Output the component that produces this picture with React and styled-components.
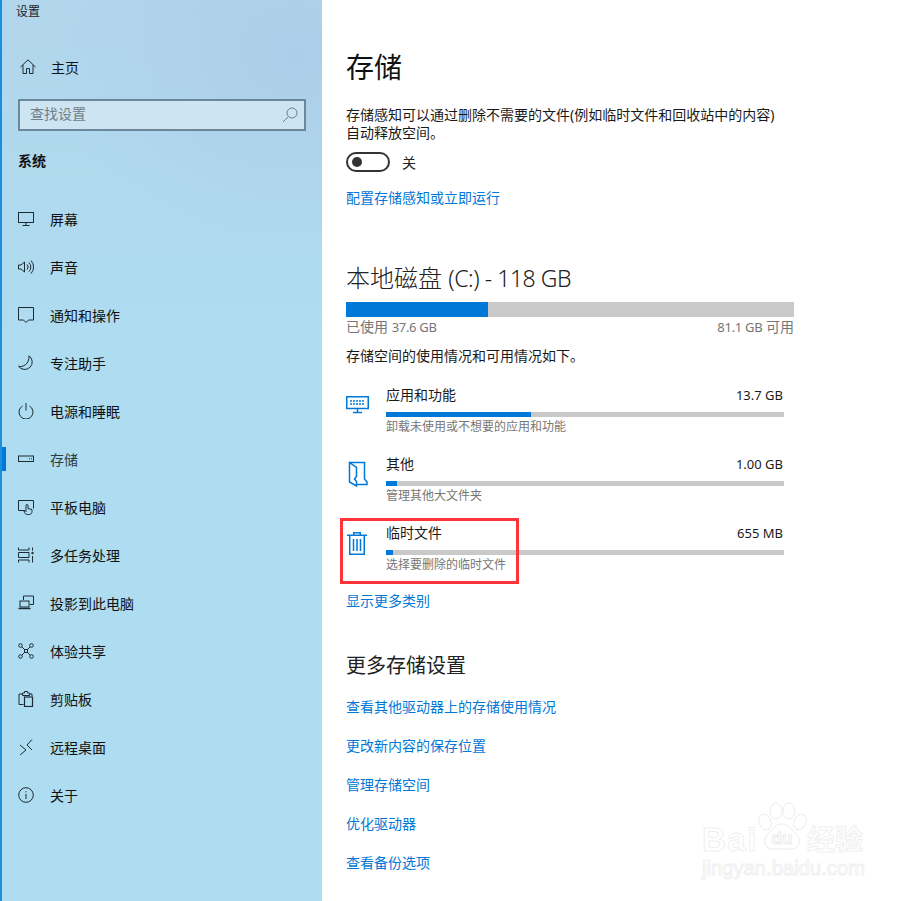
import React from 'react';
import styled, { createGlobalStyle } from 'styled-components';

const GlobalStyle = createGlobalStyle`
  html, body {
    margin: 0;
    padding: 0;
    background: #fff;
  }
  body {
    font-family: "Noto Sans", "Noto Sans CJK SC", sans-serif;
    color: #1a1a1a;
  }
`;

const Page = styled.div`
  position: relative;
  display: flex;
  width: 915px;
  height: 901px;
  overflow: hidden;
  background: #fff;
`;

const Sidebar = styled.aside`
  width: 320px;
  flex: none;
  border-left: 2px solid #1a8fe0;
  background:
    radial-gradient(ellipse 240px 200px at 92% 6%, #abcfe8 0%, rgba(171, 207, 232, 0) 100%),
    linear-gradient(180deg, #b2d6ec 0%, #aedcf0 38%, #aedcf0 100%);
`;

const AppTitle = styled.div`
  height: 22px;
  padding: 1px 0 0 14px;
  line-height: 22px;
  font-size: 12px;
  color: #222;
`;

const HomeRow = styled.div`
  display: flex;
  align-items: center;
  gap: 15px;
  height: 48px;
  margin-top: 20px;
  padding-left: 18px;
  font-size: 14px;
  color: #111;
`;

const SearchBox = styled.div`
  display: flex;
  align-items: center;
  justify-content: space-between;
  box-sizing: border-box;
  width: 288px;
  height: 32px;
  margin: 8px 0 0 16px;
  padding: 0 6px 4px 10px;
  border: 2px solid #6b8798;
  background: #cde4f2;
  font-size: 14px;
  color: #6e7f8a;
`;

const SearchIcon = styled.svg`
  width: 16px;
  height: 16px;
  flex: none;
  margin-top: 4px;
  fill: none;
  stroke: #6e7f8a;
  stroke-width: 1;
`;

const GroupTitle = styled.div`
  height: 20px;
  line-height: 20px;
  margin: 20px 0 0 16px;
  font-size: 14px;
  font-weight: 700;
  color: #111;
`;

const NavList = styled.nav`
  margin-top: 24px;
`;

const NavRow = styled.div`
  position: relative;
  display: flex;
  align-items: center;
  gap: 16px;
  height: 48px;
  padding-left: 16px;
  font-size: 14px;
  color: ${p => (p.$active ? '#2c3a42' : '#111')};

  &::before {
    content: '';
    display: ${p => (p.$active ? 'block' : 'none')};
    position: absolute;
    left: 0;
    top: 12px;
    width: 4px;
    height: 24px;
    background: #0078d7;
  }
`;

const NavIcon = styled.svg`
  width: 16px;
  height: 16px;
  flex: none;
  fill: none;
  stroke: #1c2b33;
  stroke-width: 1;
`;

const Main = styled.main`
  flex: 1;
  padding: 47px 0 0 24px;
`;

const Column = styled.div`
  width: 448px;
`;

const PageTitle = styled.h1`
  margin: 0;
  font-size: 28px;
  line-height: 40px;
  font-weight: 400;
  color: #111;
`;

const Text = styled.p`
  margin: ${p => p.$top || 0}px 0 0;
  font-size: 14px;
  line-height: ${p => p.$lh || 20}px;
  color: #1a1a1a;
  white-space: nowrap;
`;

const ToggleRow = styled.div`
  display: flex;
  align-items: center;
  gap: 12px;
  margin-top: 10px;
  height: 20px;
  font-size: 14px;
  color: #222;
`;

const Toggle = styled.div`
  display: flex;
  align-items: center;
  box-sizing: border-box;
  width: 44px;
  height: 20px;
  padding-left: 4px;
  border: 2px solid #333;
  border-radius: 10px;

  &::after {
    content: '';
    width: 10px;
    height: 10px;
    border-radius: 50%;
    background: #333;
  }
`;

const Link = styled.a`
  display: block;
  margin-top: ${p => p.$top || 0}px;
  font-size: 14px;
  line-height: 20px;
  color: #0078d7;
  white-space: nowrap;
`;

const DiskTitle = styled.h2`
  margin: 54px 0 0;
  font-size: 24px;
  line-height: 32px;
  font-weight: 300;
  color: #222;
`;

const DiskLatin = styled.span`
  font-size: 23px;
  letter-spacing: -0.45px;
`;

const Track = styled.div`
  height: ${p => p.$h}px;
  margin-top: ${p => p.$top}px;
  background: #c9c9c9;
`;

const Fill = styled.div`
  height: 100%;
  background: #0078d7;
`;

const UsageRow = styled.div`
  display: flex;
  justify-content: space-between;
  font-size: 14px;
  line-height: 20px;
  color: #767676;
`;

const UsageNumber = styled.span`
  font-size: 13px;
  letter-spacing: -0.3px;
`;

const Categories = styled.div`
  display: flex;
  flex-direction: column;
  gap: 17px;
  margin-top: 19px;
`;

const Category = styled.div`
  position: relative;
  display: grid;
  grid-template-columns: 40px 398px;
`;

const CategoryIcon = styled.svg`
  width: 26px;
  height: 26px;
  margin-top: 7px;
  fill: none;
  stroke: #0078d7;
  stroke-width: 1.5;
`;

const CategoryHead = styled.div`
  display: flex;
  justify-content: space-between;
  padding-right: 1px;
  font-size: 14px;
  line-height: 20px;
  color: #1a1a1a;
`;

const CategorySize = styled.span`
  font-size: 13px;
`;

const CategoryNote = styled.div`
  font-size: 12px;
  line-height: 20px;
  color: #767676;
`;

const Highlight = styled.div`
  position: absolute;
  left: -6px;
  top: -5px;
  width: 179px;
  height: 66px;
  border: 3px solid #ff3338;
  box-sizing: border-box;
`;

const SectionTitle = styled.h3`
  margin: 41px 0 0;
  font-size: 20px;
  line-height: 28px;
  font-weight: 400;
  color: #222;
`;

const LinkList = styled.div`
  display: flex;
  flex-direction: column;
  gap: 19px;
  margin-top: 17px;
`;

const Watermark = styled.div`
  position: absolute;
  left: 702px;
  top: 802px;
  width: 170px;
  color: #fff;
  -webkit-text-stroke: 1px #f0f0f0;
`;

const MarkTop = styled.div`
  display: flex;
  align-items: flex-end;
  height: 54px;
  font-family: "Liberation Sans", sans-serif;
  font-weight: 700;
`;

const MarkBrand = styled.span`
  width: 55px;
  font-size: 33px;
  line-height: 32px;
  letter-spacing: 1.5px;
`;

const MarkCn = styled.span`
  font-family: "Noto Sans CJK SC", sans-serif;
  font-size: 28px;
  line-height: 36px;
`;

const MarkPaw = styled.svg`
  width: 50px;
  height: 54px;
  flex: none;
  fill: #fff;
  stroke: #ececec;
`;

const MarkUrl = styled.div`
  margin-top: 1px;
  font-family: "Liberation Sans", sans-serif;
  font-size: 20px;
  line-height: 22px;
  letter-spacing: 0.1px;
`;

const navItems = [
  { label: '屏幕', icon: <><rect x="0.5" y="1.5" width="15" height="10" /><path d="M8 11.5V14M4.5 14.5h7" /></> },
  { label: '声音', icon: <><path d="M0.5 6v4h2.5l3.5 3V3L3 6z" /><path d="M9 5.5a3.5 3.5 0 0 1 0 5M11 3.5a6.5 6.5 0 0 1 0 9M13 1.5a9.5 9.5 0 0 1 0 13" /></> },
  { label: '通知和操作', icon: <path d="M0.5 0.5h15v12.5h-5l-2.5 2.5-2.5-2.5h-5z" /> },
  { label: '专注助手', icon: <path d="M11 0.8a7.5 7.5 0 1 1-10.4 10.5c4.4 1.4 11-2.6 10.4-10.5z" /> },
  { label: '电源和睡眠', icon: <><path d="M4.5 3a7 7 0 1 0 7 0" /><path d="M8 0v7.5" /></> },
  { label: '存储', active: true, icon: <><rect x="0.5" y="5" width="15" height="5.5" /><path d="M11 7.8h1M13 7.8h1" /></> },
  { label: '平板电脑', icon: <><path d="M7 11.5H0.5v-10h15v8" /><path d="M9.5 15.5c-2 0-3-1.5-3.5-3.5l1-.5 1 1V6.5a1 1 0 0 1 2 0v3l4 1v2c0 1.5-1 3-2.5 3z" /></> },
  { label: '多任务处理', icon: <><path d="M0.5 0.5v2.5h10.5V0.5M0.5 15.5v-2.5h10.5v2.5M0.5 5.5h10.5v5H0.5zM14.5 0.5v3M14.5 9v6.5" /><circle cx="14.5" cy="6" r="0.8" fill="#1c2b33" /></> },
  { label: '投影到此电脑', icon: <><path d="M5.5 5V1h10v8.5H12" /><rect x="2" y="6" width="9" height="6" /><path d="M0.5 13.5h12" strokeWidth="1.4" /></> },
  { label: '体验共享', icon: <><circle cx="2.5" cy="2.5" r="1.8" /><circle cx="13.5" cy="2.5" r="1.8" /><circle cx="2.5" cy="13.5" r="1.8" /><circle cx="13.5" cy="13.5" r="1.8" /><rect x="6.5" y="6.5" width="3" height="3" /><path d="M3.8 3.8l2.7 2.7M12.2 3.8L9.5 6.5M3.8 12.2l2.7-2.7M12.2 12.2L9.5 9.5" /></> },
  { label: '剪贴板', icon: <><path d="M5.5 13.5H1V3h3M12 3h2v2" /><path d="M4.5 4.5V2h2V0.5h3V2h2v2.5z" /><rect x="6.5" y="6" width="8" height="9.5" strokeWidth="1.2" /></> },
  { label: '远程桌面', icon: <path d="M2 6l6 5-6 5M14 0.5L9 6l5 5" /> },
  { label: '关于', icon: <><circle cx="8" cy="8" r="7.3" /><path d="M8 7v5M8 4.2v1.2" /></> },
];

const categories = [
  {
    name: '应用和功能',
    size: '13.7 GB',
    note: '卸载未使用或不想要的应用和功能',
    width: 145,
    icon: (
      <>
        <rect x="0.75" y="4.75" width="21.5" height="11.75" />
        <path d="M11.5 17v3M7 20.5h9" />
        <path d="M4 9h14M4 12h14" strokeWidth="2" strokeDasharray="2 1" opacity="0.75" />
      </>
    ),
  },
  {
    name: '其他',
    size: '1.00 GB',
    note: '管理其他大文件夹',
    width: 11,
    icon: <path d="M3.5 1.5h15v16.5l2.5 3v2.5H10.5M3.5 1.5l7 5v9l-2 2.5 2 2.5v4.5l-7-4z" />,
  },
  {
    name: '临时文件',
    size: '655 MB',
    note: '选择要删除的临时文件',
    width: 7,
    highlighted: true,
    icon: <path d="M1 5.25h20M7.75 5V2.75h6.5V5M3.75 5.25v19h14.5v-19M7.5 9v12M11 9v12M14.5 9v12" />,
  },
];

const moreLinks = ['查看其他驱动器上的存储使用情况', '更改新内容的保存位置', '管理存储空间', '优化驱动器', '查看备份选项'];

export default function App() {
  return (
    <Page>
      <GlobalStyle />
      <Sidebar>
        <AppTitle>设置</AppTitle>
        <HomeRow>
          <NavIcon viewBox="0 0 16 16">
            <path d="M0.5 8L8 0.8 15.5 8M3 6v8.5h3.5v-5h3v5H13V6" />
          </NavIcon>
          主页
        </HomeRow>
        <SearchBox>
          查找设置
          <SearchIcon viewBox="0 0 16 16">
            <circle cx="10" cy="6" r="5" />
            <path d="M6.5 9.5L1 15" />
          </SearchIcon>
        </SearchBox>
        <GroupTitle>系统</GroupTitle>
        <NavList>
          {navItems.map(item => (
            <NavRow key={item.label} $active={item.active}>
              <NavIcon viewBox="0 0 16 16">{item.icon}</NavIcon>
              {item.label}
            </NavRow>
          ))}
        </NavList>
      </Sidebar>
      <Main>
        <Column>
          <PageTitle>存储</PageTitle>
          <Text $top={19} $lh={18}>
            存储感知可以通过删除不需要的文件(例如临时文件和回收站中的内容)
            <br />
            自动释放空间。
          </Text>
          <ToggleRow>
            <Toggle />
            关
          </ToggleRow>
          <Link $top={16}>配置存储感知或立即运行</Link>
          <DiskTitle>
            本地磁盘 <DiskLatin>(C:) - 118 GB</DiskLatin>
          </DiskTitle>
          <Track $h={15} $top={8}>
            <Fill style={{ width: 142 }} />
          </Track>
          <UsageRow>
            <span>已使用 <UsageNumber>37.6 GB</UsageNumber></span>
            <span><UsageNumber>81.1 GB</UsageNumber> 可用</span>
          </UsageRow>
          <Text $top={9}>存储空间的使用情况和可用情况如下。</Text>
          <Categories>
            {categories.map(c => (
              <Category key={c.name}>
                <CategoryIcon viewBox="0 0 26 26">{c.icon}</CategoryIcon>
                <div>
                  <CategoryHead>
                    <span>{c.name}</span>
                    <CategorySize>{c.size}</CategorySize>
                  </CategoryHead>
                  <Track $h={5} $top={7}>
                    <Fill style={{ width: c.width }} />
                  </Track>
                  <CategoryNote>{c.note}</CategoryNote>
                </div>
                {c.highlighted && <Highlight />}
              </Category>
            ))}
          </Categories>
          <Link $top={16}>显示更多类别</Link>
          <SectionTitle>更多存储设置</SectionTitle>
          <LinkList>
            {moreLinks.map(l => (
              <Link key={l}>{l}</Link>
            ))}
          </LinkList>
        </Column>
      </Main>
      <Watermark>
        <MarkTop>
          <MarkBrand>Bai</MarkBrand>
          <MarkPaw viewBox="0 0 50 54">
            <ellipse cx="8" cy="20" rx="6" ry="8" transform="rotate(-25 8 20)" />
            <ellipse cx="19" cy="9" rx="6" ry="8" />
            <ellipse cx="32" cy="9" rx="6" ry="8" />
            <ellipse cx="43" cy="20" rx="6" ry="8" transform="rotate(25 43 20)" />
            <path d="M25 22c6 0 9 5 13 9 5 5 6 10 2 14-4 3-9 2-15 2s-11 1-15-2c-4-4-3-9 2-14 4-4 7-9 13-9z" />
            <text x="25" y="42" textAnchor="middle" fontSize="17" fontFamily="Liberation Sans" fontWeight="700">du</text>
          </MarkPaw>
          <MarkCn>经验</MarkCn>
        </MarkTop>
        <MarkUrl>jingyan.baidu.com</MarkUrl>
      </Watermark>
    </Page>
  );
}
